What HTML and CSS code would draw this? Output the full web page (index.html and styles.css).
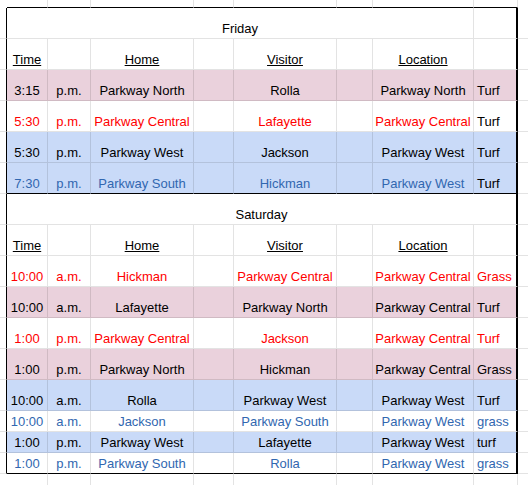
FILE: index.html
```html
<!DOCTYPE html>
<html>
<head>
<meta charset="utf-8">
<link rel="stylesheet" href="styles.css">
</head>
<body>
<div class="sheet">
  <div class="r top"><div class="g"></div><div class="c"></div><div class="c"></div><div class="c"></div><div class="c"></div><div class="c"></div><div class="c"></div><div class="c"></div><div class="c"></div><div class="x"></div></div>

  <div class="r blk"><div class="g"></div><div class="c span7">Friday</div><div class="c hcol"></div><div class="x"></div></div>
  <div class="r blk"><div class="g"></div><div class="c u"><span>Time</span></div><div class="c"></div><div class="c u"><span>Home</span></div><div class="c"></div><div class="c u"><span>Visitor</span></div><div class="c"></div><div class="c u"><span>Location</span></div><div class="c hcol"></div><div class="x"></div></div>
  <div class="r blk pink"><div class="g"></div><div class="c">3:15</div><div class="c">p.m.</div><div class="c">Parkway North</div><div class="c"></div><div class="c">Rolla</div><div class="c"></div><div class="c">Parkway North</div><div class="c hcol l">Turf</div><div class="x"></div></div>
  <div class="r blk red"><div class="g"></div><div class="c">5:30</div><div class="c">p.m.</div><div class="c">Parkway Central</div><div class="c"></div><div class="c">Lafayette</div><div class="c"></div><div class="c">Parkway Central</div><div class="c hcol l k">Turf</div><div class="x"></div></div>
  <div class="r blk blue"><div class="g"></div><div class="c">5:30</div><div class="c">p.m.</div><div class="c">Parkway West</div><div class="c"></div><div class="c">Jackson</div><div class="c"></div><div class="c">Parkway West</div><div class="c hcol l">Turf</div><div class="x"></div></div>
  <div class="r blk blue btxt end"><div class="g"></div><div class="c">7:30</div><div class="c">p.m.</div><div class="c">Parkway South</div><div class="c"></div><div class="c">Hickman</div><div class="c"></div><div class="c">Parkway West</div><div class="c hcol l k">Turf</div><div class="x"></div></div>

  <div class="r blk"><div class="g"></div><div class="c span8">Saturday</div><div class="x"></div></div>
  <div class="r blk"><div class="g"></div><div class="c u"><span>Time</span></div><div class="c"></div><div class="c u"><span>Home</span></div><div class="c"></div><div class="c u"><span>Visitor</span></div><div class="c"></div><div class="c u"><span>Location</span></div><div class="c hcol"></div><div class="x"></div></div>
  <div class="r blk red"><div class="g"></div><div class="c">10:00</div><div class="c">a.m.</div><div class="c">Hickman</div><div class="c"></div><div class="c">Parkway Central</div><div class="c"></div><div class="c">Parkway Central</div><div class="c hcol l">Grass</div><div class="x"></div></div>
  <div class="r blk pink"><div class="g"></div><div class="c">10:00</div><div class="c">a.m.</div><div class="c">Lafayette</div><div class="c"></div><div class="c">Parkway North</div><div class="c"></div><div class="c">Parkway Central</div><div class="c hcol l">Turf</div><div class="x"></div></div>
  <div class="r blk red"><div class="g"></div><div class="c">1:00</div><div class="c">p.m.</div><div class="c">Parkway Central</div><div class="c"></div><div class="c">Jackson</div><div class="c"></div><div class="c">Parkway Central</div><div class="c hcol l">Turf</div><div class="x"></div></div>
  <div class="r blk pink"><div class="g"></div><div class="c">1:00</div><div class="c">p.m.</div><div class="c">Parkway North</div><div class="c"></div><div class="c">Hickman</div><div class="c"></div><div class="c">Parkway Central</div><div class="c hcol l">Grass</div><div class="x"></div></div>
  <div class="r blk blue"><div class="g"></div><div class="c">10:00</div><div class="c">a.m.</div><div class="c">Rolla</div><div class="c"></div><div class="c">Parkway West</div><div class="c"></div><div class="c">Parkway West</div><div class="c hcol l">Turf</div><div class="x"></div></div>
  <div class="r blk short btxt"><div class="g"></div><div class="c">10:00</div><div class="c">a.m.</div><div class="c">Jackson</div><div class="c"></div><div class="c">Parkway South</div><div class="c"></div><div class="c">Parkway West</div><div class="c hcol l">grass</div><div class="x"></div></div>
  <div class="r blk short blue"><div class="g"></div><div class="c">1:00</div><div class="c">p.m.</div><div class="c">Parkway West</div><div class="c"></div><div class="c">Lafayette</div><div class="c"></div><div class="c">Parkway West</div><div class="c hcol l">turf</div><div class="x"></div></div>
  <div class="r blk short btxt end"><div class="g"></div><div class="c">1:00</div><div class="c">p.m.</div><div class="c">Parkway South</div><div class="c"></div><div class="c">Rolla</div><div class="c"></div><div class="c">Parkway West</div><div class="c hcol l">grass</div><div class="x"></div></div>

  <div class="r short after"><div class="g"></div><div class="c"></div><div class="c"></div><div class="c"></div><div class="c"></div><div class="c"></div><div class="c"></div><div class="c"></div><div class="c"></div><div class="x"></div></div>
</div>
</body>
</html>
```
FILE: styles.css
```css
html, body {
  margin: 0;
  padding: 0;
  background: #ffffff;
}

.sheet {
  font-family: "Liberation Sans", Arial, sans-serif;
  font-size: 13px;
  line-height: 15px;
  color: #000000;
  width: 528px;
  height: 485px;
  overflow: hidden;
}

.r {
  display: grid;
  grid-template-columns: 7px 41px 43px 103px 40px 103px 36px 101px 44px 1fr;
  height: 31px;
}

.r.top {
  height: 8px;
}

.r.short {
  height: 21px;
}

.g,
.c,
.x {
  box-sizing: border-box;
  border-bottom: 1px solid rgba(0, 0, 0, 0.11);
}

.c {
  border-right: 1px solid rgba(0, 0, 0, 0.11);
  display: flex;
  align-items: flex-end;
  justify-content: center;
  padding: 0 1px 2px;
  white-space: nowrap;
  min-width: 0;
}

.c.l {
  justify-content: flex-start;
  padding-left: 3px;
}

.span7 {
  grid-column: span 7;
}

.span8 {
  grid-column: span 8;
  border-right: 2px solid #000000;
}

.u span {
  text-decoration: underline;
  text-underline-offset: 1px;
}

/* frame */
.top .g,
.top .x {
  border-bottom: none;
}

.top .c {
  border-bottom: 1px solid #000000;
}

.blk .g {
  border-right: 1px solid #000000;
}

.blk .hcol {
  border-right: 2px solid #000000;
}

.end .c {
  border-bottom: 1px solid #000000;
}

/* fills */
.pink .c {
  background: #ead1dc;
}

.blue .c {
  background: #c9daf8;
}

/* text colours */
.red .c {
  color: #ff0000;
}

.btxt .c {
  color: #3167b0;
}

.r .c.k {
  color: #000000;
}

.end.blue .c.k {
  color: #000000;
}

.after .g,
.after .x {
  border-bottom: 1px solid rgba(0, 0, 0, 0.11);
}
```
